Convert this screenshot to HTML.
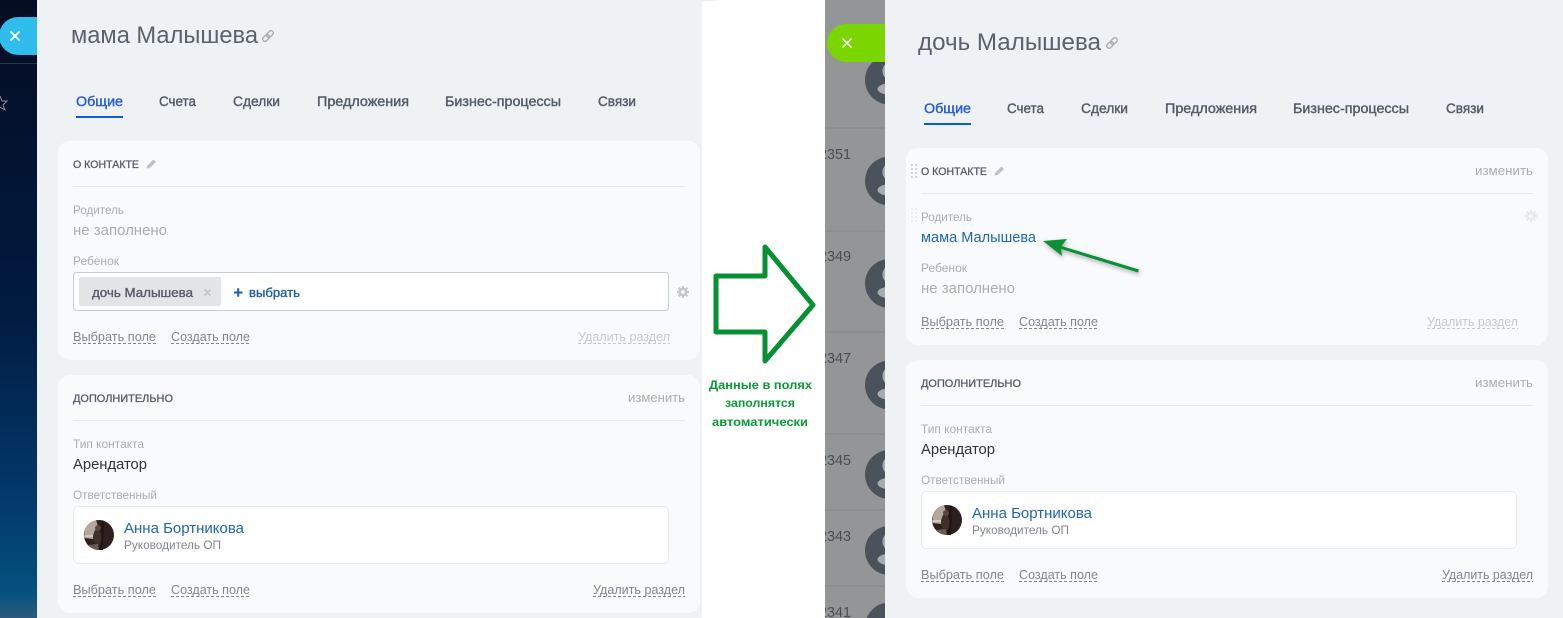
<!DOCTYPE html>
<html lang="ru"><head><meta charset="utf-8"><title>Контакт</title>
<style>
html,body{margin:0;padding:0;width:1563px;height:618px;overflow:hidden;background:#eef2f4}
svg{display:block}
text{font-family:"Liberation Sans","DejaVu Sans",sans-serif;white-space:pre}
.tab{font-size:13.5px;fill:#535c69;font-weight:400;stroke:#535c69;stroke-width:.4px}
.act{fill:#2a5fd0;stroke:#2a5fd0}
.lab{font-size:12px;fill:#a8adb4}
.emp{font-size:14.5px;fill:#a8adb4}
.lnk{font-size:13px;fill:#80868e}
.off{font-size:13px;fill:#c6c9cd}
.hd{font-size:11px;fill:#535c69;stroke:#535c69;stroke-width:.3px}
.chg{font-size:12.5px;fill:#a8adb4}
.val{font-size:14.5px;fill:#333}
.blue{font-size:14.5px;fill:#2067b0}
.sub{font-size:11.5px;fill:#80868e}
.ttl{font-size:24px;fill:#5a626e}
.grn{font-size:12px;font-weight:700;fill:#0a9a35;text-anchor:middle}
.num{font-size:15px;fill:#4a4e53}
.dash{stroke:#80868e;stroke-width:1;stroke-dasharray:3 2;fill:none}
.dashoff{stroke:#c6c9cd;stroke-width:1;stroke-dasharray:3 2;fill:none}
.div{stroke:#e6e9ec;stroke-width:1}
.card{fill:#f9fafb}
</style></head><body>
<svg width="1563" height="618" viewBox="0 0 1563 618" xmlns="http://www.w3.org/2000/svg">
<defs>
<linearGradient id="bg" x1="0" y1="0" x2="0" y2="1">
<stop offset="0" stop-color="#050d22"/><stop offset=".5" stop-color="#011a40"/><stop offset=".8" stop-color="#02386a"/><stop offset=".96" stop-color="#03527f"/><stop offset="1" stop-color="#2d5a7c"/>
</linearGradient>
<filter id="sh" x="-20%" y="-50%" width="140%" height="200%"><feDropShadow dx="1" dy="2" stdDeviation="2" flood-color="#000" flood-opacity=".35"/></filter>
<g id="gear"><circle r="3.2" fill="none" stroke="currentColor" stroke-width="2.6"/><g stroke="currentColor" stroke-width="2.2"><path d="M0-6V-4M0 4V6M-6 0H-4M4 0H6M-4.400-4.400l1.600 1.600M2.800 2.800l1.600 1.600M-4.400 4.400l1.600-1.600M2.800-2.800l1.600-1.600"/></g></g>
<g id="ava"><circle r="15" fill="#2e211d"/><path d="M-14-5A15 15 0 0 1-3-14.700L-1-9-6 4-14.800 3Z" fill="#b5a79c"/><path d="M3-14.700L5-14 4 15 -1 15Z" fill="#1f1512"/><path d="M-6 1C-5-4-3-7-1-7 3-4 3 6 1 10-3 10-6 7-6 1Z" fill="#3f302b"/><circle cx="-1" cy="-7" r="3" fill="#5d463c"/><path d="M-14.500 1H-6" stroke="#efe9e3"/><path d="M-11 10A15 15 0 0 0 0 15L-1 9Z" fill="#6b5a52"/></g>
<g id="pers"><circle r="24.500" fill="#4a525c"/><ellipse cx="-1" cy="-9" rx="6" ry="8" fill="#a8abae"/><ellipse cx="2" cy="9" rx="14" ry="6" fill="#a8abae"/></g>
<g id="pencil"><path d="M0 9.500L.8 6.500 7 .5 9.500 3 3.300 9Z" fill="#bfc3c8"/></g>
<g id="chain" fill="none" stroke="#a8adb4" stroke-width="1.400" transform="rotate(-45)"><rect x="-6.500" y="-2.300" width="7.500" height="4.600" rx="2.300"/><rect x="-1" y="-2.300" width="7.500" height="4.600" rx="2.300"/></g>
<g id="drag" fill="#c5c9ce"><circle cx="0" cy="0" r="1"/><circle cx="4" cy="0" r="1"/><circle cx="0" cy="4" r="1"/><circle cx="4" cy="4" r="1"/><circle cx="0" cy="8" r="1"/><circle cx="4" cy="8" r="1"/><circle cx="0" cy="12" r="1"/><circle cx="4" cy="12" r="1"/></g>
</defs>

<!-- dark left background -->
<rect x="0" y="0" width="37" height="618" fill="url(#bg)"/>
<rect x="0" y="63" width="37" height="1" fill="#2a3346"/>
<path d="M0 96L2 101 7 101 3 105 5 110 0 107" fill="none" stroke="#8a8f99" stroke-width="1"/>
<path d="M37 17H18A19 19 0 0 0 -1 36A19 19 0 0 0 18 55H37Z" fill="#2fbdee"/>
<path d="M10.500 31.500L19.500 40.500M19.500 31.500L10.500 40.500" stroke="#fff" stroke-width="1.700"/>

<!-- gray middle -->
<rect x="825" y="0" width="60" height="618" fill="#949596"/>
<g stroke="#85878a" stroke-width="1"><path d="M825 128H885M825 231H885M825 332H885M825 434H885M825 510H885M825 586H885"/></g>
<text class="num" x="819" y="159" textLength="32" lengthAdjust="spacingAndGlyphs">2351</text>
<text class="num" x="819" y="261" textLength="32" lengthAdjust="spacingAndGlyphs">2349</text>
<text class="num" x="819" y="363" textLength="32" lengthAdjust="spacingAndGlyphs">2347</text>
<text class="num" x="819" y="465" textLength="32" lengthAdjust="spacingAndGlyphs">2345</text>
<text class="num" x="819" y="541" textLength="32" lengthAdjust="spacingAndGlyphs">2343</text>
<text class="num" x="819" y="617" textLength="32" lengthAdjust="spacingAndGlyphs">2341</text>
<use href="#pers" x="889.500" y="80"/><use href="#pers" x="889.500" y="181"/><use href="#pers" x="889.500" y="283.500"/><use href="#pers" x="889.500" y="385"/><use href="#pers" x="889.500" y="474.500"/><use href="#pers" x="889.500" y="550.500"/>
<path d="M866.700 618A24.500 24.500 0 0 1 885 602.900V618Z" fill="#4a525c"/>

<!-- white panel -->
<rect x="702" y="0" width="123" height="618" fill="#fff"/>
<rect x="702" y="0" width="14" height="1" fill="#eef2f4"/>
<path d="M765 247L813 305 765 361V332H716V276H765Z" fill="none" stroke="#059033" stroke-width="5" stroke-linejoin="round"/>
<text class="grn" x="760.500" y="389" textLength="103" lengthAdjust="spacingAndGlyphs">Данные в полях</text>
<text class="grn" x="760" y="407" textLength="70" lengthAdjust="spacingAndGlyphs">заполнятся</text>
<text class="grn" x="760" y="426" textLength="96" lengthAdjust="spacingAndGlyphs">автоматически</text>

<!-- green button -->
<path d="M885 24H846A19 19 0 0 0 827 43A19 19 0 0 0 846 62H885Z" fill="#7bd500"/>
<path d="M842.500 38.500L851.500 47.500M851.500 38.500L842.500 47.500" stroke="#fff" stroke-width="1.500"/>

<!-- LEFT PANEL -->
<rect x="37" y="0" width="665" height="618" fill="#eef2f4"/>
<text class="ttl" x="71" y="43" textLength="187" lengthAdjust="spacingAndGlyphs">мама Малышева</text>
<use href="#chain" x="268" y="36"/>
<text class="tab act" x="76" y="106" textLength="47" lengthAdjust="spacingAndGlyphs">Общие</text>
<text class="tab" x="159" y="106" textLength="37" lengthAdjust="spacingAndGlyphs">Счета</text>
<text class="tab" x="233" y="106" textLength="47" lengthAdjust="spacingAndGlyphs">Сделки</text>
<text class="tab" x="317" y="106" textLength="92" lengthAdjust="spacingAndGlyphs">Предложения</text>
<text class="tab" x="445" y="106" textLength="116" lengthAdjust="spacingAndGlyphs">Бизнес-процессы</text>
<text class="tab" x="598" y="106" textLength="38" lengthAdjust="spacingAndGlyphs">Связи</text>
<rect x="76" y="116" width="47" height="2" fill="#0b5ad9"/>

<rect class="card" x="58" y="141" width="642" height="219" rx="12"/>
<text class="hd" x="73" y="168" textLength="66" lengthAdjust="spacingAndGlyphs">О КОНТАКТЕ</text>
<use href="#pencil" x="146.500" y="159"/>
<path class="div" d="M73 186.500H685"/>
<text class="lab" x="73" y="214" textLength="51" lengthAdjust="spacingAndGlyphs">Родитель</text>
<text class="emp" x="73" y="235" textLength="94" lengthAdjust="spacingAndGlyphs">не заполнено</text>
<text class="lab" x="73" y="265" textLength="46" lengthAdjust="spacingAndGlyphs">Ребенок</text>
<rect x="73.500" y="272.500" width="595" height="38" rx="3" fill="#fff" stroke="#c6cdd3"/>
<rect x="79" y="277" width="142" height="29" rx="2" fill="#e3e4e6"/>
<text x="92" y="297" font-size="13" fill="#535c69" stroke="#535c69" stroke-width=".35" textLength="101" lengthAdjust="spacingAndGlyphs">дочь Малышева</text>
<path d="M204.500 289.500L210.500 295.500M210.500 289.500L204.500 295.500" stroke="#c4c7cb" stroke-width="1.800"/>
<path d="M234 292.500H242.500M238.200 288.200V296.800" stroke="#1e5fa8" stroke-width="2"/>
<text x="249" y="297" font-size="13" fill="#1e5fa8" stroke="#1e5fa8" stroke-width=".35" textLength="51" lengthAdjust="spacingAndGlyphs">выбрать</text>
<use href="#gear" x="683" y="292" color="#c4c7cb"/>
<text class="lnk" x="73" y="341" textLength="83" lengthAdjust="spacingAndGlyphs">Выбрать поле</text><path class="dash" d="M73 343.500H156"/>
<text class="lnk" x="171" y="341" textLength="79" lengthAdjust="spacingAndGlyphs">Создать поле</text><path class="dash" d="M171 343.500H250"/>
<text class="off" x="578" y="341" textLength="92" lengthAdjust="spacingAndGlyphs">Удалить раздел</text><path class="dashoff" d="M578 343.500H670"/>

<rect class="card" x="58" y="375" width="642" height="238" rx="12"/>
<text class="hd" x="73" y="402" textLength="100" lengthAdjust="spacingAndGlyphs">ДОПОЛНИТЕЛЬНО</text>
<text class="chg" x="628" y="402" textLength="57" lengthAdjust="spacingAndGlyphs">изменить</text>
<path class="div" d="M73 420.500H685"/>
<text class="lab" x="73" y="448" textLength="71" lengthAdjust="spacingAndGlyphs">Тип контакта</text>
<text class="val" x="73" y="469" textLength="74" lengthAdjust="spacingAndGlyphs">Арендатор</text>
<text class="lab" x="73" y="499" textLength="84" lengthAdjust="spacingAndGlyphs">Ответственный</text>
<rect x="73.500" y="506.500" width="595" height="57" rx="5" fill="#fff" stroke="#e8ebee"/>
<use href="#ava" x="99" y="535"/>
<text class="blue" x="124" y="533" textLength="120" lengthAdjust="spacingAndGlyphs">Анна Бортникова</text>
<text class="sub" x="124" y="549" textLength="97" lengthAdjust="spacingAndGlyphs">Руководитель ОП</text>
<text class="lnk" x="73" y="594" textLength="83" lengthAdjust="spacingAndGlyphs">Выбрать поле</text><path class="dash" d="M73 596.500H156"/>
<text class="lnk" x="171" y="594" textLength="79" lengthAdjust="spacingAndGlyphs">Создать поле</text><path class="dash" d="M171 596.500H250"/>
<text class="lnk" x="593" y="594" textLength="92" lengthAdjust="spacingAndGlyphs">Удалить раздел</text><path class="dash" d="M593 596.500H685"/>

<!-- RIGHT PANEL -->
<rect x="885" y="0" width="678" height="618" fill="#eef2f4"/>
<text class="ttl" x="918" y="50" textLength="183" lengthAdjust="spacingAndGlyphs">дочь Малышева</text>
<use href="#chain" x="1112" y="43"/>
<text class="tab act" x="924" y="113" textLength="47" lengthAdjust="spacingAndGlyphs">Общие</text>
<text class="tab" x="1007" y="113" textLength="37" lengthAdjust="spacingAndGlyphs">Счета</text>
<text class="tab" x="1081" y="113" textLength="47" lengthAdjust="spacingAndGlyphs">Сделки</text>
<text class="tab" x="1165" y="113" textLength="92" lengthAdjust="spacingAndGlyphs">Предложения</text>
<text class="tab" x="1293" y="113" textLength="116" lengthAdjust="spacingAndGlyphs">Бизнес-процессы</text>
<text class="tab" x="1446" y="113" textLength="38" lengthAdjust="spacingAndGlyphs">Связи</text>
<rect x="924" y="123" width="47" height="2" fill="#0b5ad9"/>

<rect class="card" x="906" y="148" width="642" height="197" rx="12"/>
<use href="#drag" x="912" y="165"/>
<use href="#drag" x="912" y="209" opacity=".3"/>
<text class="hd" x="921" y="175" textLength="66" lengthAdjust="spacingAndGlyphs">О КОНТАКТЕ</text>
<use href="#pencil" x="994.500" y="166"/>
<text class="chg" x="1475" y="175" textLength="58" lengthAdjust="spacingAndGlyphs">изменить</text>
<path class="div" d="M921 193.500H1533"/>
<text class="lab" x="921" y="221" textLength="51" lengthAdjust="spacingAndGlyphs">Родитель</text>
<use href="#gear" x="1531" y="216" color="#e6e8ea"/>
<text class="blue" x="921" y="242" textLength="115" lengthAdjust="spacingAndGlyphs">мама Малышева</text>
<text class="lab" x="921" y="272" textLength="46" lengthAdjust="spacingAndGlyphs">Ребенок</text>
<text class="emp" x="921" y="293" textLength="94" lengthAdjust="spacingAndGlyphs">не заполнено</text>
<text class="lnk" x="921" y="326" textLength="83" lengthAdjust="spacingAndGlyphs">Выбрать поле</text><path class="dash" d="M921 328.500H1004"/>
<text class="lnk" x="1019" y="326" textLength="79" lengthAdjust="spacingAndGlyphs">Создать поле</text><path class="dash" d="M1019 328.500H1098"/>
<text class="off" x="1427" y="326" textLength="91" lengthAdjust="spacingAndGlyphs">Удалить раздел</text><path class="dashoff" d="M1427 328.500H1518"/>
<g filter="url(#sh)"><path d="M1043 241L1067 239 1061.500 246 1139 269.500 1138 272.500 1061 249 1062 256Z" fill="#0f8f36"/></g>

<rect class="card" x="906" y="360" width="642" height="238" rx="12"/>
<text class="hd" x="921" y="387" textLength="100" lengthAdjust="spacingAndGlyphs">ДОПОЛНИТЕЛЬНО</text>
<text class="chg" x="1475" y="387" textLength="58" lengthAdjust="spacingAndGlyphs">изменить</text>
<path class="div" d="M921 405.500H1533"/>
<text class="lab" x="921" y="433" textLength="71" lengthAdjust="spacingAndGlyphs">Тип контакта</text>
<text class="val" x="921" y="454" textLength="74" lengthAdjust="spacingAndGlyphs">Арендатор</text>
<text class="lab" x="921" y="484" textLength="84" lengthAdjust="spacingAndGlyphs">Ответственный</text>
<rect x="921.500" y="491.500" width="595" height="57" rx="5" fill="#fff" stroke="#e8ebee"/>
<use href="#ava" x="947" y="520"/>
<text class="blue" x="972" y="518" textLength="120" lengthAdjust="spacingAndGlyphs">Анна Бортникова</text>
<text class="sub" x="972" y="534" textLength="97" lengthAdjust="spacingAndGlyphs">Руководитель ОП</text>
<text class="lnk" x="921" y="579" textLength="83" lengthAdjust="spacingAndGlyphs">Выбрать поле</text><path class="dash" d="M921 581.500H1004"/>
<text class="lnk" x="1019" y="579" textLength="79" lengthAdjust="spacingAndGlyphs">Создать поле</text><path class="dash" d="M1019 581.500H1098"/>
<text class="lnk" x="1442" y="579" textLength="91" lengthAdjust="spacingAndGlyphs">Удалить раздел</text><path class="dash" d="M1442 581.500H1533"/>
</svg>
</body></html>
